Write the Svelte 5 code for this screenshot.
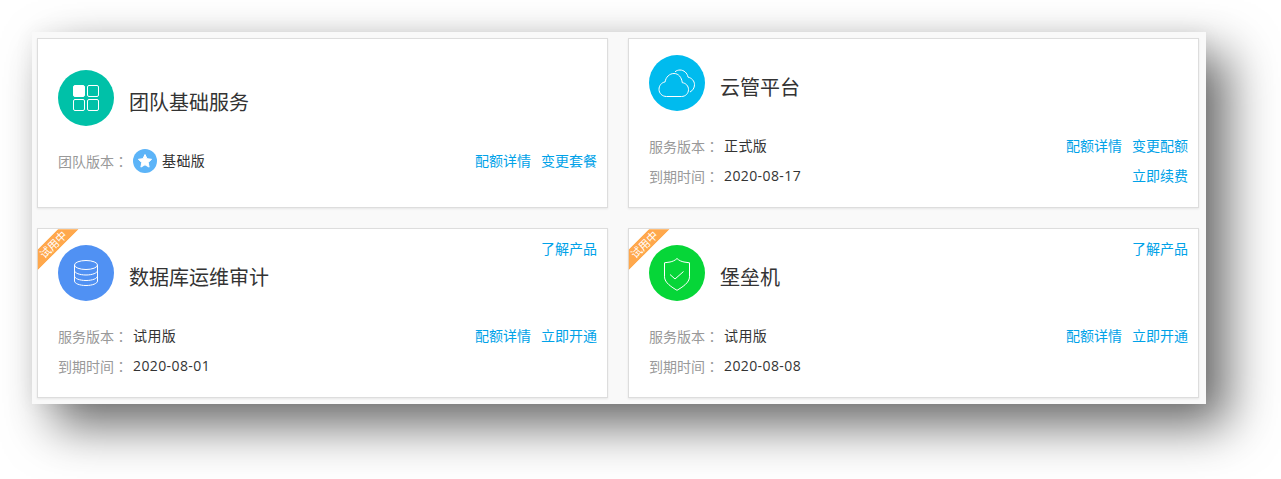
<script lang="ts">
	interface Row {
		label: string;
		value: string;
		links: string[];
		badge?: boolean;
	}

	interface Product {
		name: string;
		icon: string;
		color: string;
		trial?: boolean;
		rows: Row[];
	}

	const products: Product[] = [
		{
			name: '团队基础服务',
			icon: 'grid',
			color: '#00c1a8',
			rows: [{ label: '团队版本', value: '基础版', links: ['配额详情', '变更套餐'], badge: true }]
		},
		{
			name: '云管平台',
			icon: 'cloud',
			color: '#00bbee',
			rows: [
				{ label: '服务版本', value: '正式版', links: ['配额详情', '变更配额'] },
				{ label: '到期时间', value: '2020-08-17', links: ['立即续费'] }
			]
		},
		{
			name: '数据库运维审计',
			icon: 'db',
			color: '#5091f3',
			trial: true,
			rows: [
				{ label: '服务版本', value: '试用版', links: ['配额详情', '立即开通'] },
				{ label: '到期时间', value: '2020-08-01', links: [] }
			]
		},
		{
			name: '堡垒机',
			icon: 'shield',
			color: '#06d638',
			trial: true,
			rows: [
				{ label: '服务版本', value: '试用版', links: ['配额详情', '立即开通'] },
				{ label: '到期时间', value: '2020-08-08', links: [] }
			]
		}
	];
</script>

<div class="page">
	<div class="panel">
		{#each products as p (p.name)}
			<div class="card">
				{#if p.trial}
					<div class="ribbon">试用中</div>
					<a class="link learn" href="#top">了解产品</a>
				{/if}
				<div class="head">
					<div class="icon" style:background={p.color}>
						{#if p.icon === 'grid'}
							<svg width="56" height="56" viewBox="0 0 56 56" fill="none" stroke="#fff" stroke-width="1">
								<rect x="15.5" y="15.5" width="11" height="11" rx="1.5" fill="#fff" />
								<rect x="29.5" y="15.5" width="11" height="11" rx="1.5" />
								<rect x="15.5" y="29.5" width="11" height="11" rx="1.5" />
								<rect x="29.5" y="29.5" width="11" height="11" rx="1.5" />
							</svg>
						{:else if p.icon === 'cloud'}
							<svg width="56" height="56" viewBox="0 0 56 56" fill="none" stroke="#fff" stroke-width="1">
								<path d="M17.500 41.500h15c4 0 7-3.100 7-6.900 0-3.700-2.700-6.500-6.200-6.900-.7-5.400-3.700-9.200-8.300-9.200-4.500 0-8.200 3.600-8.900 8.400-3.700.6-6.100 3.900-6.100 7.400 0 4 3.200 7.200 7.500 7.200z" />
								<path d="M26 16.800c1.400-1.200 3.200-1.800 5-1.800 3.900 0 7.300 3 8 7.100 3.800.9 6.500 3.900 6.500 7.600 0 3.300-1.900 6-4.500 7.300" />
							</svg>
						{:else if p.icon === 'db'}
							<svg width="56" height="56" viewBox="0 0 56 56" fill="none" stroke="#fff" stroke-width="1">
								<ellipse cx="28" cy="20" rx="11.500" ry="4.500" />
								<path d="M16.500 20v16c0 2.500 5.100 4.500 11.500 4.500s11.500-2 11.500-4.500V20" />
								<path d="M16.500 25.500c0 2.500 5.100 4.500 11.500 4.500s11.500-2 11.500-4.500" />
								<path d="M16.500 31c0 2.500 5.100 4.500 11.500 4.500s11.500-2 11.500-4.500" />
							</svg>
						{:else}
							<svg width="56" height="56" viewBox="0 0 56 56" fill="none" stroke="#fff" stroke-width="1">
								<path d="M28 13.500c-2 2-4.500 3-7 3.500l-5.500.8v14c0 6 7.500 10.500 12.500 13.500 5-3 12.500-7.500 12.500-13.500v-14L35 17c-2.500-.5-5-1.500-7-3.500z" />
								<path d="M21 29.500l5 4.500 8.500-7.500" />
							</svg>
						{/if}
					</div>
					<div class="name">{p.name}</div>
				</div>
				{#each p.rows as r (r.label)}
					<div class="row">
						<span class="label">{r.label}<span class="colon">：</span></span>
						{#if r.badge}
							<span class="badge">
								<svg width="24" height="24" viewBox="0 0 24 24">
									<circle cx="12" cy="12" r="12" fill="#5cb4f8" />
									<path
										d="M12 5.500l2 4.200 4.600.6-3.400 3.200.9 4.600-4.100-2.300-4.100 2.300.9-4.600-3.400-3.200 4.600-.6z"
										fill="#fff"
										stroke="#fff"
										stroke-linejoin="round"
									/>
								</svg>
							</span>
						{/if}
						<span class="value">{r.value}</span>
						<span class="links">
							{#each r.links as l (l)}
								<a class="link" href="#top">{l}</a>
							{/each}
						</span>
					</div>
				{/each}
			</div>
		{/each}
	</div>
</div>

<style>
	:global(body) {
		background: #fff;
		font-family: 'Open Sans', 'Noto Sans CJK SC', sans-serif;
	}

	.page {
		padding: 32px 0 0 32px;
		width: 1281px;
		height: 479px;
		box-sizing: border-box;
		overflow: hidden;
	}

	.panel {
		display: grid;
		grid-template-columns: 571px 571px;
		grid-auto-rows: 170px;
		gap: 20px;
		width: 1174px;
		box-sizing: border-box;
		padding: 6px 7px 6px 5px;
		background: #f9f9f9;
		box-shadow:
			22px 22px 46px rgba(0, 0, 0, 0.58),
			0 0 20px rgba(0, 0, 0, 0.05);
	}

	.card {
		position: relative;
		display: flex;
		flex-direction: column;
		justify-content: center;
		box-sizing: border-box;
		padding: 0 10px 0 20px;
		background: #fff;
		border: 1px solid #ddd;
		box-shadow: 0 1px 2px rgba(0, 0, 0, 0.08);
	}

	.head {
		display: flex;
		align-items: center;
		gap: 15px;
		margin-bottom: 20px;
	}

	.icon {
		width: 56px;
		height: 56px;
		border-radius: 50%;
		flex: none;
	}

	.icon svg {
		display: block;
	}

	.name {
		padding-top: 6px;
		font-size: 20px;
		color: #333;
	}

	.row {
		display: flex;
		align-items: center;
		height: 30px;
		font-size: 14px;
		line-height: 20px;
	}

	.label {
		color: #999;
		width: 75px;
		white-space: nowrap;
	}

	.colon {
		font-family: 'Noto Sans CJK TC', sans-serif;
	}

	.badge {
		height: 24px;
		margin-right: 5px;
	}

	.badge svg {
		display: block;
	}

	.value {
		color: #333;
		letter-spacing: 0.4px;
	}

	.links {
		margin-left: auto;
		display: flex;
		gap: 10px;
	}

	.link {
		color: #00a2e8;
		text-decoration: none;
		font-size: 14px;
	}

	.learn {
		position: absolute;
		top: 9px;
		right: 10px;
	}

	.ribbon {
		position: absolute;
		left: -14px;
		top: 8px;
		width: 58px;
		height: 15px;
		line-height: 15px;
		text-align: center;
		font-size: 11px;
		color: #fff;
		background: #ffa84c;
		clip-path: polygon(15px 0, 43px 0, 100% 100%, 0 100%);
		transform: rotate(-45deg);
	}
</style>
